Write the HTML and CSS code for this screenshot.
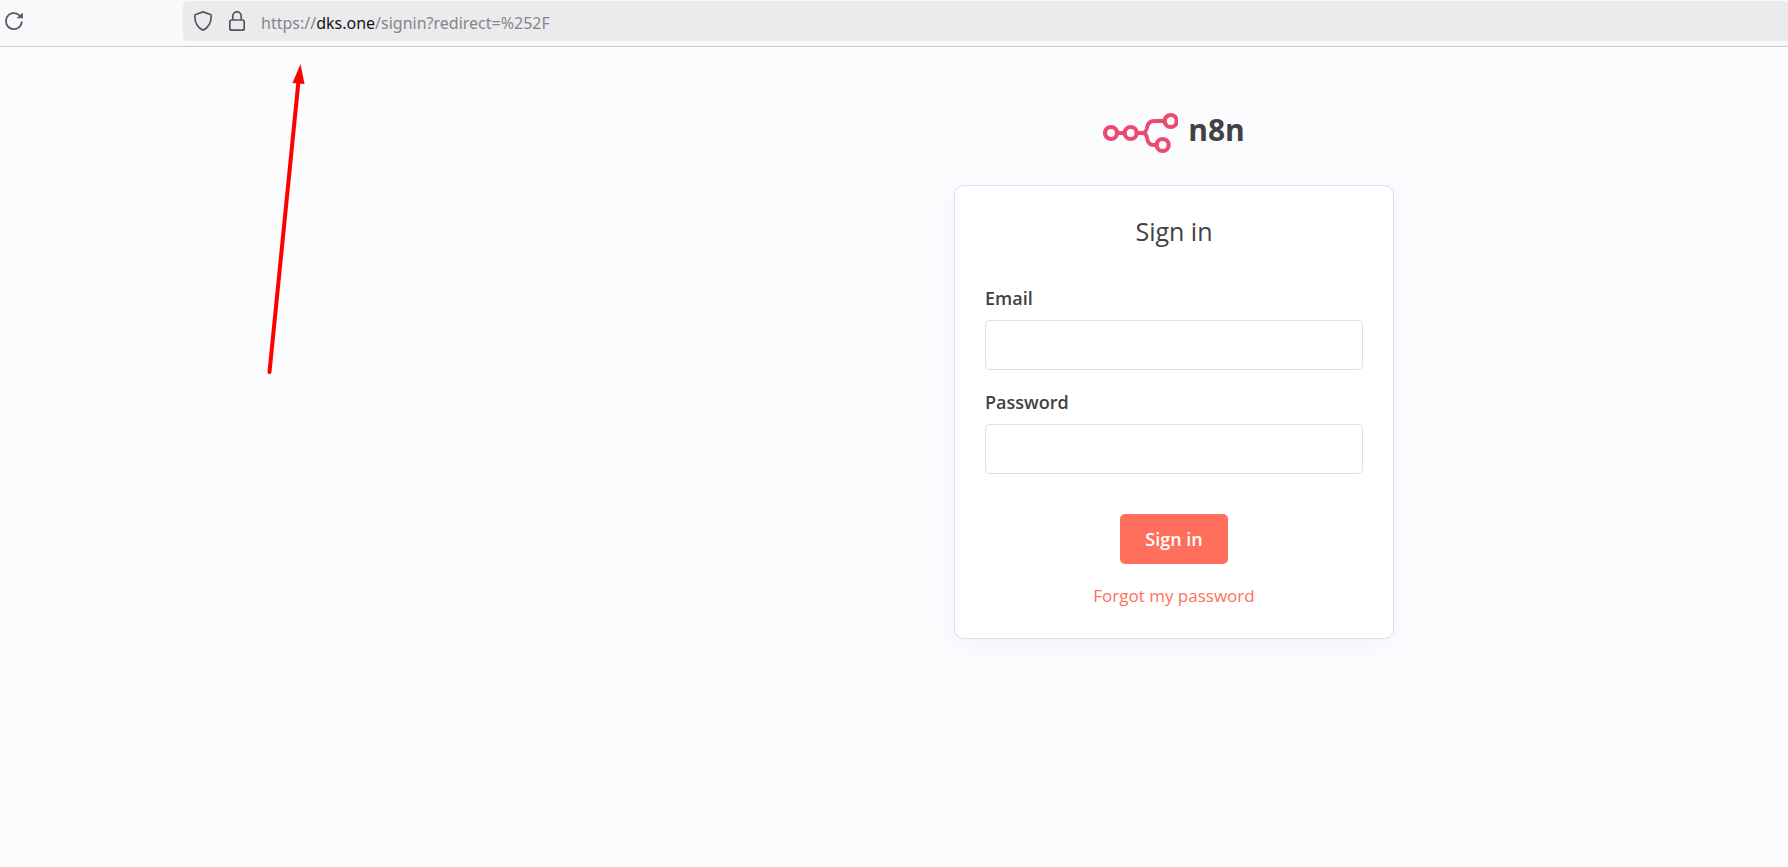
FILE: index.html
```
<!DOCTYPE html>
<html lang="en">
<head>
    <meta charset="UTF-8">
    <meta name="viewport" content="width=device-width, initial-scale=1.0">
    <title>n8n - Sign in</title>
    <link rel="stylesheet" href="styles.css">
</head>
<body>
    <header class="toolbar">
        <button class="toolbar__reload" type="button" aria-label="Reload">
            <svg width="20" height="20" viewBox="0 0 20 20">
                <path d="M17.8 11.2a8 8 0 1 1-2.6-7.1" fill="none" stroke="#5b5b66" stroke-width="1.8" stroke-linecap="round"/>
                <path d="M18.9 1.4v5.9h-6.4z" fill="#5b5b66"/>
            </svg>
        </button>
        <div class="urlbar">
            <svg class="urlbar__icon" width="20" height="22" viewBox="0 0 20 22">
                <path d="M10 1.9L17.3 4.5Q18.2 4.8 18.2 6C18.2 12.5 15.6 17.6 10 20.2C4.4 17.6 1.8 12.5 1.8 6Q1.8 4.8 2.7 4.5Z" fill="none" stroke="#55555c" stroke-width="1.7" stroke-linejoin="round"/>
            </svg>
            <svg class="urlbar__icon" width="18" height="22" viewBox="0 0 18 22">
                <path d="M4.8 10V6a4.2 4.2 0 0 1 8.4 0v4" fill="none" stroke="#55555c" stroke-width="1.7"/>
                <rect x="1.8" y="10" width="14.4" height="10.2" rx="2" fill="none" stroke="#55555c" stroke-width="1.7"/>
            </svg>
            <div class="urlbar__text">https://<span class="urlbar__domain">dks.one</span>/signin?redirect=%252F</div>
        </div>
    </header>

    <main class="auth">
        <div class="logo">
            <svg width="75" height="42" viewBox="1 0 75 42">
                <g fill="none" stroke="#ea4b71" stroke-width="4.2">
                    <circle cx="9" cy="21" r="6"/>
                    <circle cx="28.7" cy="21" r="6"/>
                    <circle cx="68.7" cy="9" r="6"/>
                    <circle cx="60.7" cy="33" r="6"/>
                    <path d="M15 21h7.700M34.700 21h5.300c4.500 0 4.500-3.500 5.300-6.500c.9-3.700 2.700-5.500 6.700-5.500h10.700M40 21c4.500 0 4.500 3 5.300 6.200c.9 3.800 2.300 5.800 6 5.800h3.500" stroke-width="3.8"/>
                </g>
            </svg>
            <span class="logo__name">n8n</span>
        </div>

        <form class="card">
            <h1 class="card__title">Sign in</h1>
            <div class="field">
                <label for="email">Email</label>
                <input id="email" type="email" name="email">
            </div>
            <div class="field">
                <label for="password">Password</label>
                <input id="password" type="password" name="password">
            </div>
            <button class="card__submit" type="submit">Sign in</button>
            <a class="card__link" href="#">Forgot my password</a>
        </form>
    </main>

    <svg class="arrow" width="48" height="316" viewBox="0 0 48 316">
        <path d="M9.500 311L38.500 20" stroke="#ff0000" stroke-width="4" stroke-linecap="round"/>
        <path d="M40.500 3L44.500 23L32.500 22Z" fill="#ff0000"/>
    </svg>
</body>
</html>
```

FILE: styles.css
```
* {
    box-sizing: border-box;
}

body {
    margin: 0;
    min-height: 100vh;
    background-color: #fbfcfe;
    color: #414244;
    font-family: "Open Sans", sans-serif;
    font-size: 18px;
    line-height: 24px;
}

button {
    border: none;
    font-family: inherit;
    cursor: pointer;
}

/* browser toolbar */
.toolbar {
    display: flex;
    align-items: center;
    justify-content: space-between;
    gap: 159px;
    padding: 1px 0 5px 4px;
    background-color: #f9f9fb;
    border-bottom: 1px solid #c9c9ce;
}

.toolbar__reload {
    display: flex;
    padding: 0;
    background: none;
}

.urlbar {
    display: flex;
    flex: 1;
    align-items: center;
    height: 40px;
    padding-left: 10px;
    border-radius: 5px 0 0 5px;
    background-color: #ebebed;
}

.urlbar__icon {
    margin-right: 15px;
}

.urlbar__text {
    padding-top: 3px;
    color: #85858a;
    font-family: "Noto Sans", sans-serif;
    font-size: 16px;
}

.urlbar__domain {
    color: #15141a;
}

/* sign in page */
.auth {
    display: flex;
    flex-direction: column;
    align-items: center;
    padding: 65px 0 0 560px;
}

.logo {
    display: flex;
    align-items: center;
    gap: 10px;
    margin-bottom: 31px;
}

.logo__name {
    padding-bottom: 6px;
    color: #414244;
    font-size: 30px;
    font-weight: 700;
    line-height: 36px;
}

.card {
    display: flex;
    flex-direction: column;
    align-items: center;
    width: 440px;
    padding: 30px;
    background-color: #fff;
    border: 1px solid #dbdfe7;
    border-radius: 10px;
    box-shadow: 0 5px 20px rgba(99, 77, 255, 0.06);
}

.card__title {
    margin: 0 0 40px;
    font-size: 25px;
    font-weight: 400;
    line-height: 30px;
}

.field {
    display: flex;
    flex-direction: column;
    gap: 10px;
    width: 100%;
    margin-bottom: 20px;
}

.field label {
    font-weight: 600;
}

.field input {
    height: 50px;
    padding: 0 16px;
    background-color: #fff;
    border: 1px solid #dbdfe7;
    border-radius: 5px;
    color: inherit;
    font: inherit;
}

.card__submit {
    height: 50px;
    margin: 20px 0;
    padding: 0 25px;
    border-radius: 5px;
    background-color: #ff6f5c;
    color: #fff;
    font-size: 18px;
    font-weight: 600;
}

.card__link {
    color: #ff6f5c;
    font-size: 17px;
    text-decoration: none;
}

/* pointer drawn over the page */
.arrow {
    position: absolute;
    top: 61px;
    left: 260px;
    pointer-events: none;
}
```
